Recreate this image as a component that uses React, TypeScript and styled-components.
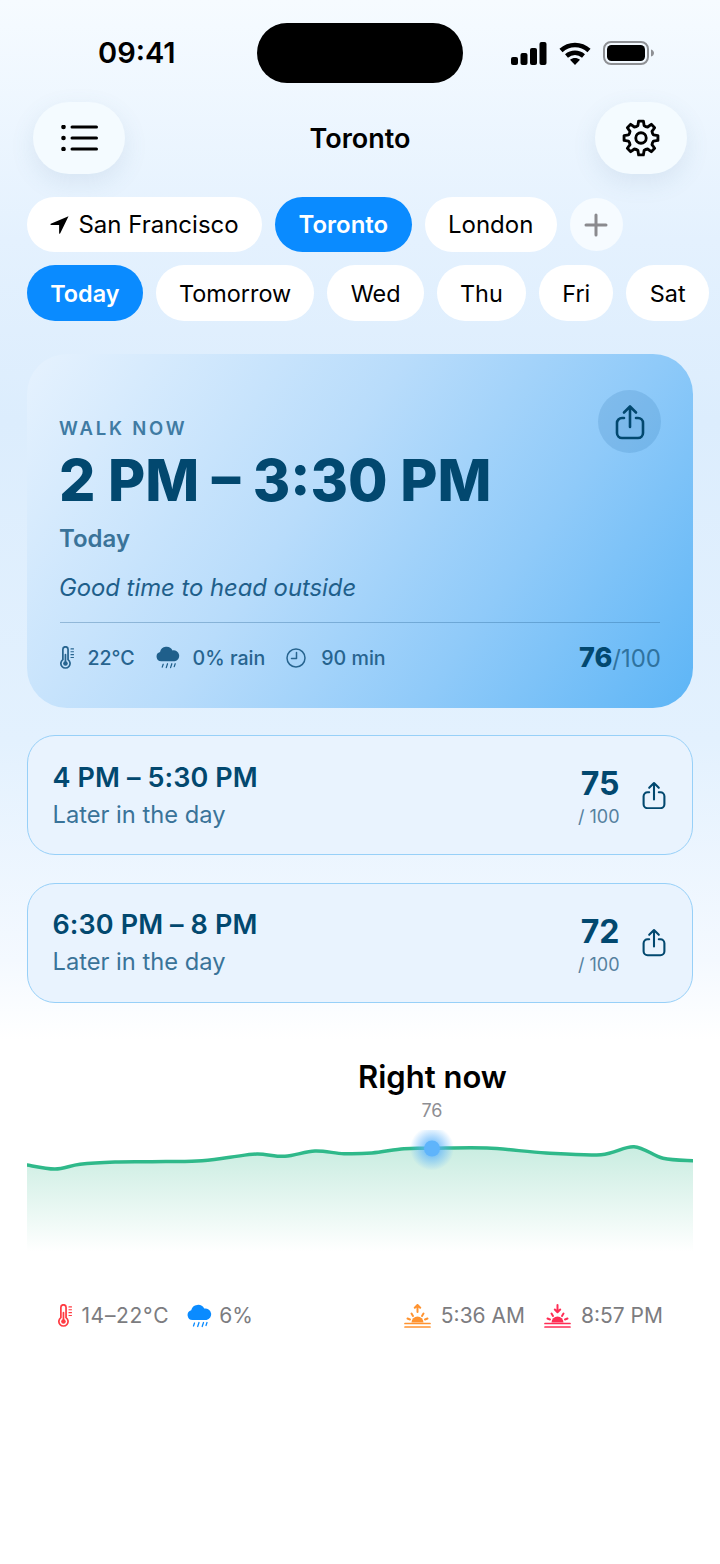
import React from "react";
import styled, { createGlobalStyle } from "styled-components";

const GlobalStyle = createGlobalStyle`
  * { box-sizing: border-box; }
  html, body { margin: 0; padding: 0; background: #ffffff; }
  body { font-family: Inter, "Noto Sans", sans-serif; }
  button { font-family: inherit; border: none; padding: 0; cursor: pointer; }
`;

const Page = styled.div`
  width: 720px;
  height: 1564px;
  overflow: hidden;
  background: linear-gradient(180deg, #f6fbff 0px, #e4f1fe 240px, #dcedfd 420px, #e3f1fe 740px, #f4f9ff 960px, #ffffff 1040px);
`;

const StatusBar = styled.div`
  height: 102px;
  padding-top: 23px;
  display: grid;
  grid-template-columns: 1fr 206px 1fr;
  align-items: start;
`;

const Clock = styled.div`
  margin: 13px 0 0 98px;
  font-size: 29px;
  line-height: 34px;
  font-weight: 600;
  color: #000;
  white-space: nowrap;
`;

const Island = styled.div`
  height: 60px;
  border-radius: 30px;
  background: #000;
`;

const StatusIcons = styled.div`
  display: flex;
  align-items: center;
  gap: 12px;
  margin: 18px 0 0 48px;
`;

const Header = styled.header`
  height: 72px;
  padding: 0 33px;
  display: flex;
  align-items: center;
  justify-content: space-between;
`;

const RoundButton = styled.button`
  width: 92px;
  height: 72px;
  border-radius: 36px;
  background: #f4fbff;
  box-shadow: 0 8px 24px rgba(80, 120, 160, 0.12);
  display: flex;
  align-items: center;
  justify-content: center;
  color: #000;
`;

const Title = styled.h1`
  margin: 0;
  font-size: 27px;
  font-weight: 600;
  color: #000;
`;

const PillRow = styled.div<{ $top: number }>`
  display: flex;
  align-items: center;
  gap: 13px;
  margin-top: ${(p) => p.$top}px;
  padding-left: 27px;
  white-space: nowrap;
`;

const Pill = styled.button<{ $active?: boolean; $size: number; $height: number; $pad: number }>`
  height: ${(p) => p.$height}px;
  padding: 0 ${(p) => p.$pad}px;
  border-radius: 28px;
  display: flex;
  align-items: center;
  gap: 9px;
  font-size: ${(p) => p.$size}px;
  font-weight: ${(p) => (p.$active ? 600 : 400)};
  color: ${(p) => (p.$active ? "#fff" : "#000")};
  background: ${(p) => (p.$active ? "#0a8bff" : "#fff")};
`;

const AddPill = styled.button`
  width: 53px;
  height: 53px;
  border-radius: 50%;
  background: #f6fbff;
  display: flex;
  align-items: center;
  justify-content: center;
`;

const Hero = styled.section`
  position: relative;
  margin: 33px 27px 0;
  height: 354px;
  padding: 63px 33px 0;
  border-radius: 40px;
  background: linear-gradient(125deg, #e6f2fe 0%, #b8dcfb 42%, #8fcaf9 70%, #5db5f6 100%);
`;

const Eyebrow = styled.div`
  margin-left: -1px;
  font-size: 18.500px;
  line-height: 22px;
  font-weight: 600;
  letter-spacing: 2.800px;
  color: #3f7ba3;
`;

const HeroTime = styled.h2`
  margin: 7px 0 0 -1px;
  font-size: 57.200px;
  line-height: 70px;
  font-weight: 800;
  color: #02486f;
  white-space: nowrap;
`;

const HeroDay = styled.div`
  margin: 8px 0 0 -1px;
  font-size: 24px;
  line-height: 30px;
  font-weight: 600;
  color: #3a7399;
`;

const HeroNote = styled.div`
  margin: 19px 0 0 -1px;
  font-size: 23.800px;
  line-height: 30px;
  font-style: italic;
  color: #1f5f8b;
`;

const Divider = styled.div`
  margin-top: 19px;
  height: 1px;
  background: rgba(40, 100, 150, 0.35);
`;

const HeroFooter = styled.div`
  margin-top: 18px;
  display: flex;
  align-items: center;
  justify-content: space-between;
`;

const Stats = styled.div`
  display: flex;
  align-items: center;
  gap: 21px;
`;

const Stat = styled.div<{ $gap: number }>`
  display: flex;
  align-items: center;
  gap: ${(p) => p.$gap}px;
  font-size: 19.600px;
  font-weight: 500;
  color: #27648f;
`;

const HeroScore = styled.div`
  margin-right: -1px;
  font-size: 24px;
  color: #2f729f;
  b { font-size: 27px; font-weight: 800; color: #02486f; }
`;

const ShareCircle = styled.button`
  position: absolute;
  top: 36px;
  right: 32px;
  width: 63px;
  height: 63px;
  border-radius: 50%;
  background: rgba(40, 110, 170, 0.18);
  display: flex;
  align-items: center;
  justify-content: center;
`;

const SlotList = styled.div`
  margin: 27px 27px 0;
  display: flex;
  flex-direction: column;
  gap: 27.500px;
`;

const Slot = styled.div`
  height: 120px;
  padding: 0 26.500px 0 24.500px;
  border: 1.500px solid #97d0f8;
  border-radius: 28px;
  background: #e9f3fe;
  display: flex;
  align-items: center;
  justify-content: space-between;
`;

const SlotTime = styled.div`
  font-size: 27px;
  line-height: 34px;
  font-weight: 600;
  letter-spacing: 0.100px;
  color: #02486f;
`;

const SlotNote = styled.div`
  margin-top: 5px;
  font-size: 23.700px;
  line-height: 30px;
  color: #3a7399;
`;

const SlotRight = styled.div`
  display: flex;
  align-items: center;
  gap: 22px;
`;

const SlotScore = styled.div`
  padding-top: 4px;
  text-align: right;
  font-size: 32px;
  line-height: 36px;
  font-weight: 700;
  color: #02486f;
  small {
    display: block;
    margin-top: 4px;
    font-size: 18px;
    line-height: 22px;
    font-weight: 400;
    color: #55819f;
  }
`;

const NowTitle = styled.h3`
  margin: 53.500px 0 0 358px;
  width: 148px;
  text-align: center;
  font-size: 31px;
  line-height: 42px;
  font-weight: 600;
  color: #000;
  white-space: nowrap;
`;

const NowValue = styled.div`
  margin: 2px 0 0 358px;
  width: 148px;
  text-align: center;
  font-size: 18px;
  line-height: 22px;
  color: #8e8e93;
`;

const Chart = styled.svg`
  display: block;
  margin: 8px 0 0 27px;
`;

const Facts = styled.div`
  margin-top: 51px;
  padding: 0 57px 0 58px;
  display: flex;
  justify-content: space-between;
`;

const FactGroup = styled.div<{ $gap: number }>`
  display: flex;
  align-items: center;
  gap: ${(p) => p.$gap}px;
`;

const Fact = styled.div<{ $gap: number; $spread?: number }>`
  display: flex;
  align-items: center;
  gap: ${(p) => p.$gap}px;
  font-size: 21px;
  letter-spacing: ${(p) => p.$spread || 0}px;
  color: #7c7c80;
  white-space: nowrap;
`;

const MenuIcon = () => (
  <svg width="37" height="26" viewBox="0 0 37 26" fill="none" stroke="#000" strokeWidth="3" strokeLinecap="round">
    <path d="M11 2h24.500M11 13h24.500M11 24h24.500" />
    <circle cx="2.500" cy="2" r="2.300" fill="#000" stroke="none" />
    <circle cx="2.500" cy="13" r="2.300" fill="#000" stroke="none" />
    <circle cx="2.500" cy="24" r="2.300" fill="#000" stroke="none" />
  </svg>
);

// eight rounded teeth round the centre
const gearPath = () => {
  const at = (r: number, deg: number) => {
    const a = (deg * Math.PI) / 180;
    return `${(20 + r * Math.cos(a)).toFixed(2)} ${(20 + r * Math.sin(a)).toFixed(2)}`;
  };
  let d = "";
  for (let i = 0; i < 8; i++) {
    const c = i * 45 - 90;
    d += `${i === 0 ? "M" : "L"}${at(13.5, c - 14)} L${at(18, c - 8)} L${at(18, c + 8)} L${at(13.5, c + 14)} Q${at(12.8, c + 22.5)} ${at(13.5, c + 31)} `;
  }
  return d + "Z";
};

const GearIcon = () => (
  <svg width="38" height="38" viewBox="0 0 40 40" fill="none" stroke="#000" strokeWidth="3" strokeLinejoin="round">
    <path d={gearPath()} />
    <circle cx="20" cy="20" r="5.500" />
  </svg>
);

const ShareIcon = ({ size, color }: { size: number; color: string }) => (
  <svg width={size} height={size * 1.2} viewBox="0 0 30 36" fill="none" stroke={color} strokeWidth="2.600" strokeLinecap="round" strokeLinejoin="round">
    <path d="M9 14H7a5 5 0 0 0-5 5v10a5 5 0 0 0 5 5h16a5 5 0 0 0 5-5V19a5 5 0 0 0-5-5h-2" />
    <path d="M15 23V3M9 8.500 15 2.500l6 6" />
  </svg>
);

const Thermometer = ({ color, size }: { color: string; size: number }) => (
  <svg width={size * 0.625} height={size} viewBox="0 0 15 24" fill="none" stroke={color} strokeWidth="1.800" strokeLinecap="round">
    <path d="M3 3.500a2.700 2.700 0 0 1 5.400 0v10.700a4.800 4.800 0 1 1-5.400 0z" />
    <path d="M5.700 9v9" strokeWidth="1.800" />
    <circle cx="5.700" cy="18.200" r="2.400" fill={color} stroke="none" />
    <path d="M11.500 3h2.500M11.500 6h2.500M11.500 9h2.500M11.500 12h2.500" strokeWidth="1.300" />
  </svg>
);

const RainCloud = ({ color, width }: { color: string; width: number }) => (
  <svg width={width} height={width * 0.96} viewBox="0 0 25 24" fill="none">
    <path fill={color} d="M5.500 16a5 5 0 0 1-1.300-9.800A7 7 0 0 1 17.200 4.600 5.800 5.800 0 0 1 19.500 16z" />
    <path stroke={color} strokeWidth="1.300" strokeLinecap="round" d="M7.500 19l-1 3M12 18.500l-1.300 4M16.500 18.500l-1.300 4M20 18.500l-1 3" />
  </svg>
);

const ClockIcon = () => (
  <svg width="20" height="20" viewBox="0 0 20 20" fill="none" stroke="#27648f" strokeWidth="1.500" strokeLinecap="round" strokeLinejoin="round">
    <circle cx="10" cy="10" r="9" />
    <path d="M10.500 4.500V10.500H5.500" />
  </svg>
);

const SunEvent = ({ color, down }: { color: string; down?: boolean }) => (
  <svg width="27" height="24" viewBox="0 0 27 24" fill="none" stroke={color} strokeWidth="2" strokeLinecap="round" strokeLinejoin="round">
    <path d="M7.500 18.500a6 6 0 0 1 12 0z" fill={color} stroke="none" />
    <path d="M1 19.500h25M1 23h25" strokeWidth="1.700" />
    <path d="M3.500 14.500l2.500 1M23.500 14.500l-2.500 1M7.500 9.500l1.500 2.500M19.500 9.500l-1.500 2.500" />
    {down ? <path d="M13.500 1v7M10.800 5.500l2.700 2.700 2.700-2.700" /> : <path d="M13.500 8V1M10.800 3.700L13.500 1l2.700 2.700" />}
  </svg>
);

const linePoints: [number, number][] = [
  [0, 35], [28, 39], [53, 34.300], [88, 32], [125, 31.700], [170, 31], [203, 27.300], [230, 24], [258, 26.300],
  [288, 21], [317, 23.700], [345, 23], [377, 18.700], [405, 18.300], [460, 18], [519, 23], [574, 24.700],
  [607, 16.700], [636, 28.300], [666, 30.700],
];

// smooth the samples into one curve
const smoothPath = (pts: [number, number][]) => {
  let d = `M${pts[0][0]} ${pts[0][1]}`;
  for (let i = 0; i < pts.length - 1; i++) {
    const p0 = pts[i - 1] || pts[i];
    const p1 = pts[i];
    const p2 = pts[i + 1];
    const p3 = pts[i + 2] || p2;
    const c1x = p1[0] + (p2[0] - p0[0]) / 6;
    const c1y = p1[1] + (p2[1] - p0[1]) / 6;
    const c2x = p2[0] - (p3[0] - p1[0]) / 6;
    const c2y = p2[1] - (p3[1] - p1[1]) / 6;
    d += ` C${c1x.toFixed(1)} ${c1y.toFixed(1)} ${c2x.toFixed(1)} ${c2y.toFixed(1)} ${p2[0]} ${p2[1]}`;
  }
  return d;
};

const cities = { $size: 24, $height: 55, $pad: 23.4 };
const days = { $size: 23.4, $height: 56, $pad: 23.25 };

const App = () => {
  const line = smoothPath(linePoints);
  return (
    <Page>
      <GlobalStyle />
      <StatusBar>
        <Clock>09:41</Clock>
        <Island />
        <StatusIcons>
          <svg width="36" height="23" viewBox="0 0 36 23" fill="#000">
            <rect x="0" y="15" width="7" height="8" rx="2" />
            <rect x="9.500" y="11" width="7" height="12" rx="2" />
            <rect x="19" y="6" width="7" height="17" rx="2" />
            <rect x="28.500" y="0" width="7" height="23" rx="2" />
          </svg>
          <svg width="32" height="23" viewBox="0 0 32 23" fill="none" stroke="#000" strokeWidth="4.500">
            <path d="M2 8.500C10 1 22 1 30 8.500" />
            <path d="M7.500 14C12.500 9.700 19.500 9.700 24.500 14" />
            <path d="M16 23l-5-5.200c3-2.300 7-2.300 10 0z" fill="#000" stroke="none" />
          </svg>
          <svg width="51" height="24" viewBox="0 0 51 24" fill="none">
            <rect x="1" y="1" width="44" height="22" rx="7" stroke="#8e9094" strokeWidth="2" />
            <rect x="4" y="4" width="38" height="16" rx="4.500" fill="#000" />
            <path d="M48 8.500c2 .5 3 2 3 3.500s-1 3-3 3.500z" fill="#8e9094" />
          </svg>
        </StatusIcons>
      </StatusBar>

      <Header>
        <RoundButton aria-label="Menu"><MenuIcon /></RoundButton>
        <Title>Toronto</Title>
        <RoundButton aria-label="Settings"><GearIcon /></RoundButton>
      </Header>

      <PillRow $top={23}>
        <Pill {...cities}>
          <svg width="19" height="19" viewBox="0 0 20 20" fill="#000">
            <path d="M19.500 1.200 10.800 19.300c-.3.700-1.200.5-1.200-.2V10.600L1.100 10.400c-.7 0-.9-.9-.3-1.200z" />
          </svg>
          San Francisco
        </Pill>
        <Pill {...cities} $active>Toronto</Pill>
        <Pill {...cities}>London</Pill>
        <AddPill aria-label="Add city">
          <svg width="24" height="24" viewBox="0 0 24 24" stroke="#8a8a8e" strokeWidth="3" strokeLinecap="round">
            <path d="M12 2v20M2 12h20" />
          </svg>
        </AddPill>
      </PillRow>

      <PillRow $top={13}>
        <Pill {...days} $active>Today</Pill>
        <Pill {...days}>Tomorrow</Pill>
        <Pill {...days}>Wed</Pill>
        <Pill {...days}>Thu</Pill>
        <Pill {...days}>Fri</Pill>
        <Pill {...days}>Sat</Pill>
      </PillRow>

      <Hero>
        <ShareCircle aria-label="Share"><ShareIcon size={30} color="#02486f" /></ShareCircle>
        <Eyebrow>WALK NOW</Eyebrow>
        <HeroTime>2 PM – 3:30 PM</HeroTime>
        <HeroDay>Today</HeroDay>
        <HeroNote>Good time to head outside</HeroNote>
        <Divider />
        <HeroFooter>
          <Stats>
            <Stat $gap={13}><Thermometer color="#27648f" size={23} />22°C</Stat>
            <Stat $gap={13}><RainCloud color="#1f5f8b" width={24} />0% rain</Stat>
            <Stat $gap={15}><ClockIcon />90 min</Stat>
          </Stats>
          <HeroScore><b>76</b>/100</HeroScore>
        </HeroFooter>
      </Hero>

      <SlotList>
        <Slot>
          <div>
            <SlotTime>4 PM – 5:30 PM</SlotTime>
            <SlotNote>Later in the day</SlotNote>
          </div>
          <SlotRight>
            <SlotScore>75<small>/ 100</small></SlotScore>
            <ShareIcon size={24} color="#02486f" />
          </SlotRight>
        </Slot>
        <Slot>
          <div>
            <SlotTime>6:30 PM – 8 PM</SlotTime>
            <SlotNote>Later in the day</SlotNote>
          </div>
          <SlotRight>
            <SlotScore>72<small>/ 100</small></SlotScore>
            <ShareIcon size={24} color="#02486f" />
          </SlotRight>
        </Slot>
      </SlotList>

      <NowTitle>Right now</NowTitle>
      <NowValue>76</NowValue>

      <Chart width="666" height="122" viewBox="0 0 666 122">
        <defs>
          <linearGradient id="area" x1="0" y1="0" x2="0" y2="1">
            <stop offset="0" stopColor="#2fb88a" stopOpacity="0.26" />
            <stop offset="1" stopColor="#2fb88a" stopOpacity="0" />
          </linearGradient>
          <radialGradient id="glow">
            <stop offset="0.3" stopColor="#5fb4fb" stopOpacity="0.75" />
            <stop offset="1" stopColor="#5fb4fb" stopOpacity="0" />
          </radialGradient>
        </defs>
        <path d={`${line} L666 122 L0 122 Z`} fill="url(#area)" />
        <path d={line} fill="none" stroke="#2fb98a" strokeWidth="3.500" strokeLinecap="round" />
        <circle cx="405" cy="18.500" r="22" fill="url(#glow)" />
        <circle cx="405" cy="18.500" r="8" fill="#5fb4fb" />
      </Chart>

      <Facts>
        <FactGroup $gap={18}>
          <Fact $gap={9} $spread={0.7}><Thermometer color="#ff3b42" size={23} />14–22°C</Fact>
          <Fact $gap={7}><RainCloud color="#0a8bff" width={25} />6%</Fact>
        </FactGroup>
        <FactGroup $gap={19}>
          <Fact $gap={10}><SunEvent color="#ff9330" />5:36 AM</Fact>
          <Fact $gap={10}><SunEvent color="#ff2d55" down />8:57 PM</Fact>
        </FactGroup>
      </Facts>
    </Page>
  );
};

export default App;
